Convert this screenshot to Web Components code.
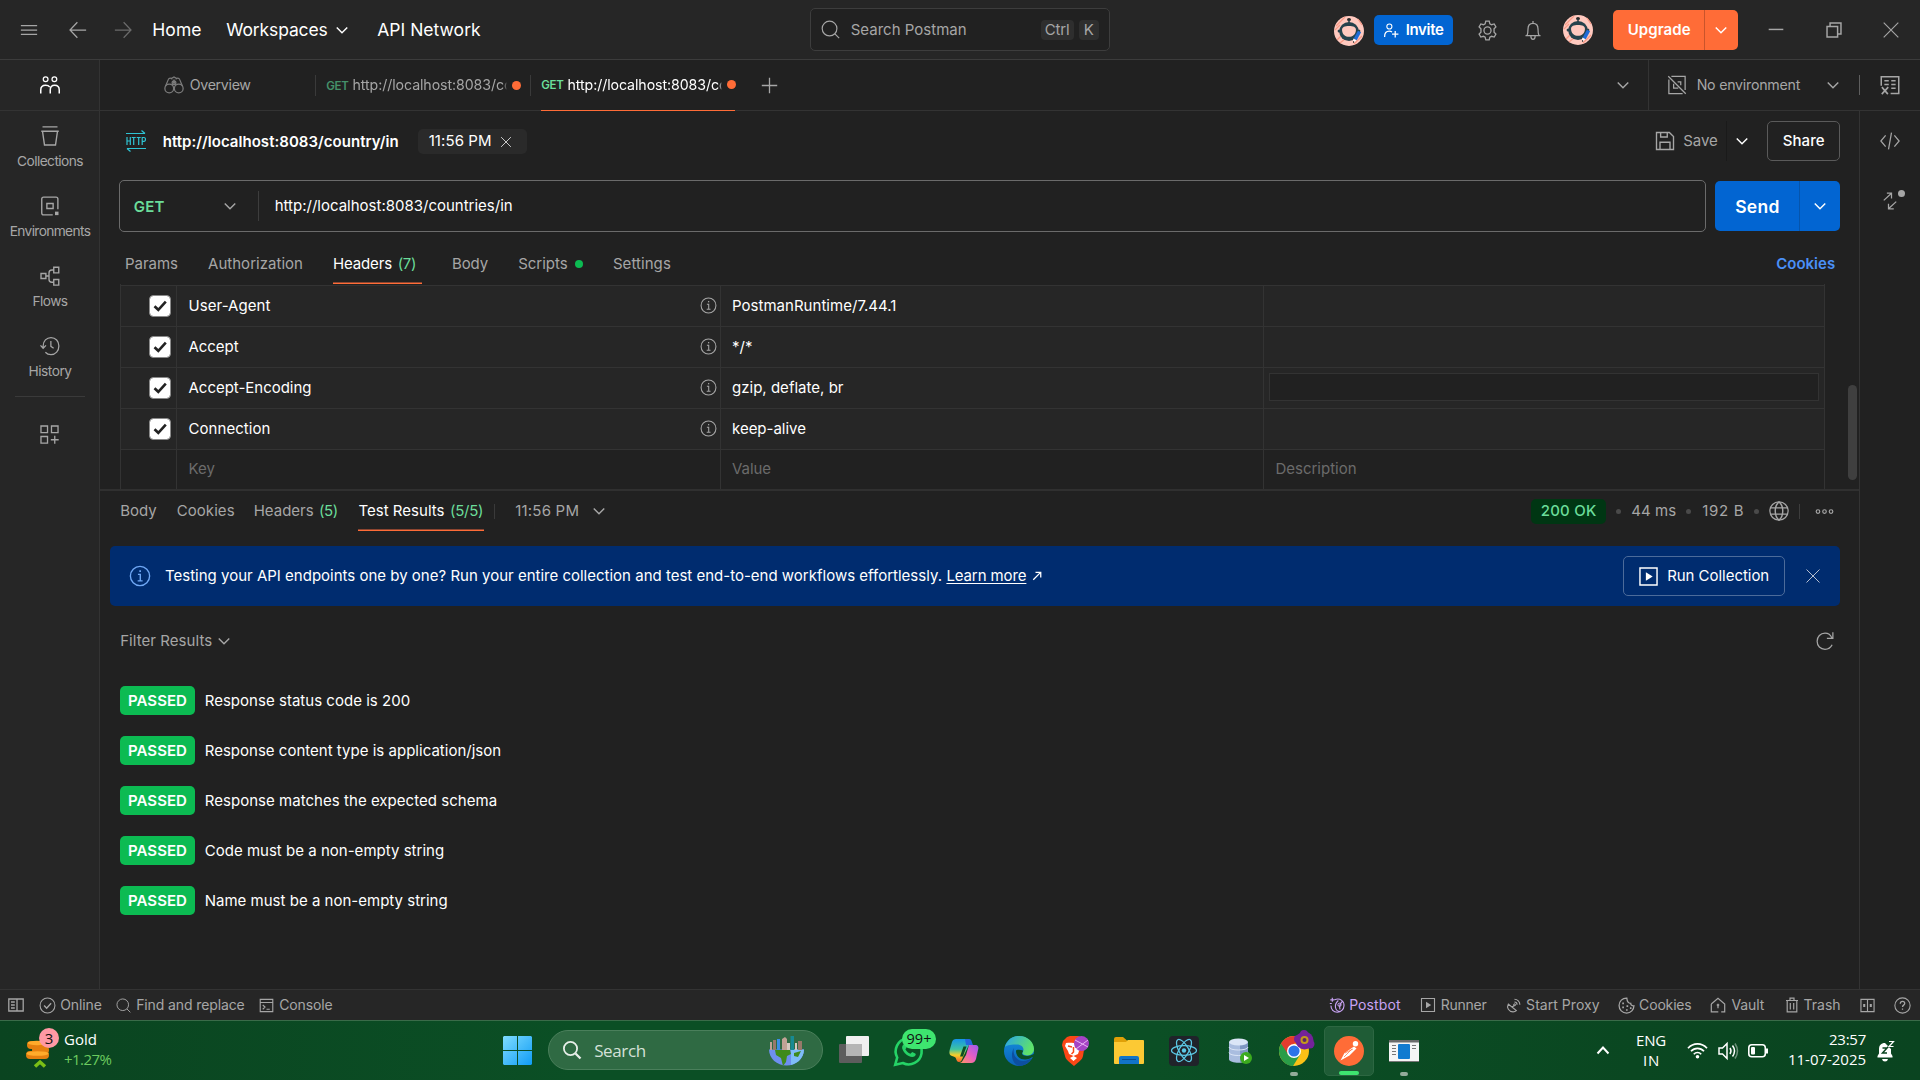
<!DOCTYPE html>
<html lang="en">
<head>
<meta charset="utf-8">
<title>Postman</title>
<style>
html,body{margin:0;height:100%;overflow:hidden;background:#212121}
body{font:15px Inter,"Liberation Sans",sans-serif;color:#a6a6a6;display:flex;flex-direction:column;width:1920px;height:1080px}
</style>
</head>
<body>
<top-bar></top-bar>
<app-shell></app-shell>
<status-bar></status-bar>
<task-bar></task-bar>
<script>
const ICONS = {
  menu: '<path d="M1.5 4.5h13M1.5 8h13M1.5 11.5h13"/>',
  back: '<path d="M14.5 8H2M7.5 1.8 1.6 8l5.9 6.2"/>',
  fwd: '<path d="M1.5 8H14M8.5 1.8 14.4 8l-5.9 6.2"/>',
  down: '<path d="M3.8 6 8 10.2 12.2 6" stroke-width="1.15"/>',
  search: '<circle cx="7.2" cy="7.2" r="6.2"/><path d="m11.7 11.7 3.6 3.6"/>',
  invite: '<circle cx="6" cy="4.2" r="2.4"/><path d="M1.5 14c0-3.4 1.6-5.4 4.4-5.4 1 0 1.9.3 2.6.8M11.5 8.5v6M8.5 11.5h6" stroke-width="1.2"/>',
  gear: '<circle cx="8" cy="8" r="2.700"/><path d="M6.7.9h2.6l.5 2 1.3.7 2-.6 1.300 2.2-1.400 1.500v2.600l1.400 1.500-1.300 2.2-2-.6-1.300.7-.5 2H6.700l-.5-2-1.300-.7-2 .6-1.300-2.200L3 9.300V6.700L1.600 5.200 2.900 3l2 .6 1.300-.7z"/>',
  bell: '<path d="M2 12.500h12M3.200 12.500c.6-1.200.8-2.500.8-5.300C4 4.500 5.600 2.600 8 2.600s4 1.900 4 4.600c0 2.800.2 4.100.8 5.300M8 2.600V.8M6.300 13c0 1.500.6 2.400 1.700 2.400S9.700 14.500 9.700 13"/>',
  min: '<path d="M1.500 7.500h13" stroke-width="1.300"/>',
  restore: '<path d="M1.800 4.800h9.400v9.400H1.800z M4.500 4.500V1.800h9.700v9.700h-3" stroke-width="1.300"/>',
  close: '<path d="m1.500 1.500 13 13M14.500 1.500l-13 13"/>',
  team: '<circle cx="4.500" cy="3.300" r="1.900"/><circle cx="11.500" cy="3.300" r="1.900"/><path d="M.6 14.800V12c0-2.400 1.500-3.800 3.900-3.800 1.600 0 2.600.5 3.300 1.400M8.200 14.800V12c0-2.400 1.200-3.800 3.500-3.800s3.700 1.400 3.700 3.800v2.800" stroke-width="1.200"/>',
  coll: '<path d="M2 .7h12M1 4.200h14M2 4.200l1.600 11h8.800l1.600-11" stroke-width="1.100"/>',
  env: '<path d="M14.300 10.500V2.400c0-1-.5-1.500-1.500-1.500H2.900c-1 0-1.500.5-1.500 1.500v11.200c0 1 .5 1.500 1.500 1.500h7.300M5.500 6h5v4h-5z" stroke-width="1.100"/><path d="M12 12.500h2.800v2.800H12z" fill="currentColor" stroke="none"/>',
  flow: '<path d="M.8 6h3.900v4H.8zM11 1h4v4.500h-4zM11 10.800h4v4.500h-4zM4.700 8h2.500M11 3.200H9.500C8 3.200 7.200 4 7.200 5.500v5c0 1.500.8 2.500 2.300 2.500H11" stroke-width="1.100"/>',
  hist: '<path d="M2.500 9.500V8c0-4 2.800-6.800 6.300-6.800 3.700 0 6.300 3 6.300 6.800s-2.600 6.900-6.300 6.900c-1.900 0-3.400-.7-4.500-1.900M.4 7.500l2.100 2.300 2.300-2.300M8.700 4v4.300l2.200 1.500"/>',
  apps: '<path d="M1.500 1.500h5v5h-5zM9.500 1.500h5v5h-5zM1.500 9.500h5v5h-5zM12 9v6M9 12h6"/>',
  binoc: '<circle cx="4.200" cy="10.800" r="3.500"/><circle cx="11.800" cy="10.800" r="3.500"/><path d="M1.200 9 3.500 3.500c.5-1.300 2.500-1.300 3 0M14.800 9l-2.300-5.500c-.5-1.300-2.500-1.300-3 0M5.500 3 8 1.600 10.500 3M6.800 8.300 8 4.500l1.200 3.800M7.700 10.300h.6"/><circle cx="8" cy="6.200" r="1.500"/>',
  plus: '<path d="M8 1.500v13M1.500 8h13" stroke-width="1.100"/>',
  noenv: '<path d="M3.500 1h11v11M12.500 14.800H1.500V3.500M1 1l14 14M8.500 5.500H11v2.600M5.300 7v3.500H9"/>',
  vars: '<path d="M1 8.500V1.300h14v13.500H8.500M3.500 4.500H7M3.500 7.500H7M9 4.500h3.500M9 7.500h3.500M9 10.500h3.500" stroke-width="1.200"/><path d="m1.500 9.700 4.800 5.600M6.600 9.700l-5.200 5.600" stroke-width="1.300"/>',
  save: '<path d="M1.200 1.200h10.300l3.300 3.300v10.300H1.200zM4.500 1.200v3.600h5.300V1.200M4 14.800V9h8v5.800" stroke-width="1.100"/>',
  code: '<path d="M4.500 3.500.7 8l3.800 4.500M11.500 3.500 15.300 8l-3.800 4.500M9.200 1.300 6.800 14.700"/>',
  sync: '<path d="M3 7.500 9 2M5.500 1.700h3.700V6M13 8.500 7 14M6.800 10.200v4H11" stroke-width="1"/>',
  info: '<circle cx="8" cy="8" r="7"/><path d="M6.500 6.800H8.200v4.600M6.300 11.500h3.600"/><path d="M7.500 3.800h1.200V5H7.500z" fill="currentColor" stroke="none"/>',
  globe: '<circle cx="8" cy="8" r="7.300"/><path d="M1.200 5.500h13.600M1.200 10.500h13.600M8 .7C5.800 2.500 5 5 5 8s.8 5.500 3 7.300c2.200-1.800 3-4.300 3-7.300S10.200 2.500 8 .7" stroke-width="1.150"/>',
  more: '<circle cx="2.500" cy="8" r="1.500"/><circle cx="8" cy="8" r="1.500"/><circle cx="13.500" cy="8" r="1.500"/>',
  ext: '<path d="M3 13 12.500 3.500M6 3.200h7V10" stroke-width="1.700"/>',
  run: '<path d="M1.500 1.500h13v13h-13z" stroke-width="1.100"/><path d="m6 4.800 5.200 3.200L6 11.200z" fill="currentColor" stroke="none"/>',
  refresh: '<path d="M13.500 5.500C12.500 3 10.600 1.700 8 1.700 4.300 1.700 1.700 4.500 1.700 8.200s2.600 6.400 6.300 6.400c2.600 0 4.600-1.300 5.700-3.600M14.300 1v4.800H9.500"/>',
  sidebar: '<path d="M.8 2h14.400v12H.8zM9 2v12M3 5h3.800M3 8h3.800M3 11h3.800" stroke-width="1.300"/>',
  online: '<circle cx="8" cy="8" r="7"/><path d="m4.800 8 2.400 2.500 4.200-4.600" stroke-width="1.300"/>',
  console: '<path d="M1.300 1.500h13.400v13H1.300zM1.300 4.800h13.400M4 7.500l2.400 2.200L4 12M8 12h3.500" stroke-width="1.200"/>',
  postbot: '<path d="M5.500 2.800C11 .5 15.200 4 15 8.700c-.2 4-3.200 6.500-6.700 6.500-3.700 0-6.500-2.800-6.300-6.600M3.300.8v4M1.300 2.800h4M.8 6.500h2M9.300 3.500C7 5.500 6 7.500 6.500 10.500s3 4 4.800 4M13.500 4.300c-2.500 2.200-3.500 4.500-2.500 8" stroke-width="1.150"/><circle cx="10.500" cy="7.800" r="1.600"/>',
  proxy: '<path d="M2.500 6.500c-2.200 3.800.5 8.300 5 8.300 1.500 0 2.700-.5 3.500-1.300zM6.500 10l3-3M9 4.300c1.600 0 2.800 1.200 2.800 2.900M9 1.300c3.300 0 5.800 2.500 5.800 5.900" stroke-width="1.200"/><circle cx="9.200" cy="7.200" r="1.100"/>',
  cookie: '<path d="M8.300 1C4.200.8 1 4 1 8s3.100 7.100 7.100 7.100S15 12 15 8.300c-1.800.2-3-.6-3-2.300-2 0-3.500-1.700-3.700-5z" stroke-width="1.200"/><path d="M4 6h1.600M4 9.800h1.600M8 8.600h1.600M7.500 12.200h1.600M11.200 10.500h1.500" stroke-width="1.500"/>',
  vault: '<path d="M1.300 7 8 1.200 14.700 7v7.800h-3.500M1.300 7v7.800h7M8 7.300v4" stroke-width="1.200"/><circle cx="8" cy="8" r=".9"/>',
  trash: '<path d="M2 3.500h12M6 3.300V1.200h4v2.100M3.200 3.500v11.300h9.600V3.500M6.300 6v6.500M9.700 6v6.500" stroke-width="1.200"/>',
  panes: '<path d="M1 1.500h14v13H1zM8 1.500v13M4 7h1v2H4zM11 7h1v2h-1z" stroke-width="1.200"/>',
  help: '<circle cx="8" cy="8" r="7.200"/><path d="M5.900 6.300c0-1.300.8-2.100 2.100-2.100s2.100.8 2.100 1.900c0 1.600-2.100 1.500-2.100 3.200M8 10.800V12" stroke-width="1.200"/>'
};

class UiIcon extends HTMLElement {
  connectedCallback() {
    const s = this.getAttribute('size') || 20;
    if (!this.shadowRoot) this.attachShadow({mode: 'open'});
    this.shadowRoot.innerHTML = `<style>:host{display:block;flex:none;width:${s}px;height:${s}px}svg{display:block;overflow:visible}</style>
      <svg width="${s}" height="${s}" viewBox="0 0 16 16" fill="none" stroke="currentColor">${ICONS[this.getAttribute('name')]}</svg>`;
  }
}
customElements.define('ui-icon', UiIcon);

/* A single line of text that tracks itself to fill the width given by "w". */
class UiText extends HTMLElement {
  connectedCallback() {
    if (!this.shadowRoot) this.attachShadow({mode: 'open'});
    this.shadowRoot.innerHTML = `<style>:host{display:block;flex:none;white-space:nowrap;line-height:20px}span{display:inline-block}</style><span><slot></slot></span>`;
    const w = +this.getAttribute('w');
    if (!w) return;
    this.style.width = w + 'px';
    const span = this.shadowRoot.querySelector('span');
    const gap = (w - span.getBoundingClientRect().width) / this.textContent.length;
    span.style.letterSpacing = Math.max(-0.7, Math.min(0.7, gap)) + 'px';
  }
}
customElements.define('ui-text', UiText);

/* Lays items out left to right; each item is [left, width, markup, style]. */
const row = (from, items) => {
  let end = from;
  return items.map(([x, w, html, css = '']) => {
    const m = x - end;
    end = x + w;
    return `<div class="i" style="margin-left:${m}px;width:${w}px;${css}">${html}</div>`;
  }).join('');
};
const t = (x, w, text, css) => [x - 0.3, w + 1, `<ui-text w="${w + 1}">${text}</ui-text>`, css];
const ic = (cx, name, size = 20, css) => [cx - size / 2, size, `<ui-icon name="${name}" size="${size}"></ui-icon>`, css];
const bar = (x, h, color, css = '') => [x, 1, '', `height:${h}px;background:${color};${css}`];
const W = 'color:#fff;', G = 'color:#6bdd9a;';

const base = `:host,*{box-sizing:border-box}.i{flex:none;display:block}.r{display:flex;align-items:center}.i.f,.f{display:flex;align-items:center}`;
const define = (tag, css, html) => customElements.define(tag, class extends HTMLElement {
  connectedCallback() {
    if (this.shadowRoot) return;
    this.attachShadow({mode: 'open'}).innerHTML = `<style>${base}${css}</style>${html}`;
  }
});

define('user-avatar', ':host{display:block}svg{display:block}', `<svg width="30" height="30" viewBox="0 0 30 30">
  <circle cx="15" cy="15" r="15" fill="#ffc9bf"/><path d="M2 10 11 1M1 14 6 9M24 3l4 6M3 24l5-5M6 27l5-4M20 28l8-8" stroke="#f79a86" stroke-width="1.200"/>
  <ellipse cx="15" cy="15.500" rx="9.800" ry="9.600" fill="#26424c"/><ellipse cx="15" cy="3.600" rx="2" ry="1.700" fill="#2a2a2a"/><path d="M15 4v3" stroke="#2b3f47" stroke-width="1.500"/>
  <circle cx="5.200" cy="15" r="1.600" fill="#26424c"/><circle cx="24.800" cy="15" r="1.600" fill="#26424c"/>
  <path d="M10 10.800c2-1 8-1 10 0 1.500.7 2.200 2.200 1.900 4-.6 4-3.400 6-6.900 6s-6.300-2-6.900-6c-.3-1.800.4-3.300 1.900-4z" fill="#ffc9bf"/>
  <path d="m25.500 15.500-4.300 8" stroke="#1f6bd8" stroke-width="3.600"/><path d="m19.200 22.500 3 1.800-3 2.700z" fill="#fff"/><path d="M19 25v2l1.500-1z" fill="#111"/></svg>`);

define('top-bar', `:host{display:block;flex:none;height:60px;background:#262626;border-bottom:1px solid #3c3c3c}
  .r{height:60px}
  .search{height:43px;border:1px solid #3d3d3d;border-radius:5px;background:#212121;display:flex;align-items:center;padding-left:10px}
  .key{height:20px;border-radius:4px;background:#2e2e2e}.btn{display:flex;align-items:center;border-radius:5px;color:#fff;font-weight:600}`,
  `<div class="r">${row(0, [
    ic(29, 'menu', 20), ic(78, 'back', 20), ic(123, 'fwd', 20, 'color:#6b6b6b'),
    t(152.500, 48.500, 'Home', W + 'font-size:17.500px'), t(226.500, 100.500, 'Workspaces', W + 'font-size:17.500px'),
    ic(342, 'down', 20, W), t(377.500, 102.500, 'API Network', W + 'font-size:17.500px'),
    [810, 300, `<div class="search">${row(821, [
      ic(830.500, 'search', 19), t(851, 115, 'Search Postman'),
      [1041, 33, `<div class="key">${row(1041, [t(1045, 24, 'Ctrl')])}</div>`],
      [1079, 20, `<div class="key">${row(1079, [t(1084, 9, 'K')])}</div>`]])}</div>`, 'margin-bottom:1px'],
    [1334, 30, '<user-avatar></user-avatar>', 'margin-top:1px'],
    [1374, 79, `<div class="btn" style="height:30px;background:#0265d2">${row(1374, [ic(1391.500, 'invite', 17), t(1406, 37, 'Invite')])}</div>`],
    ic(1488, 'gear', 21), ic(1533, 'bell', 20),
    [1563, 30, '<user-avatar></user-avatar>'],
    [1613, 125, `<div class="btn" style="height:40px;background:#ff6c37">${row(1613, [t(1628, 62, 'Upgrade'), bar(1704, 40, '#c9542b'), ic(1721, 'down', 20)])}</div>`],
    ic(1776, 'min', 18), ic(1834, 'restore', 18), ic(1891, 'close', 18)])}</div>`);

const side = (name, label, w) => `<div class="s"><ui-icon name="${name}" size="20"></ui-icon><ui-text w="${w + 1}">${label}</ui-text></div>`;
define('side-bar', `:host{display:block;flex:none;width:100px;background:#262626;border-right:1px solid #333}
  .ws{height:51px;border-bottom:1px solid #333;color:#fff;display:flex;justify-content:center;align-items:center}
  .s{height:70px;display:flex;flex-direction:column;align-items:center;padding:15px 0 0 1px;gap:5px;font-size:13.750px}
  hr{border:0;height:1px;background:#3a3a3a;margin:5px 14px 27px 15px}.a{display:flex;justify-content:center}`,
  `<div class="ws"><ui-icon name="team" size="20"></ui-icon></div>
   ${side('coll', 'Collections', 65)}${side('env', 'Environments', 79.500)}${side('flow', 'Flows', 34)}${side('hist', 'History', 42)}
   <hr><div class="a"><ui-icon name="apps" size="21"></ui-icon></div>`);

define('tab-strip', `:host{display:flex;align-items:center;flex:none;height:51px;border-bottom:1px solid #333;font-size:14.200px}
  .url{-webkit-mask-image:linear-gradient(90deg,#000 98%,transparent);mask-image:linear-gradient(90deg,#000 98%,transparent)}
  .dot{width:9px;height:9px;border-radius:50%;background:#ff6c37}
  .act{height:51px;border-bottom:1px solid #ff6c37;display:flex;align-items:center;color:#fff}`,
  row(100, [
    ic(174, 'binoc', 20, 'color:#7c7c7c'), t(190, 60, 'Overview'), bar(315, 21, '#3a3a3a'),
    t(326.500, 21.500, 'GET', 'color:#45916a;font-size:11.500px;font-weight:600;margin-top:1px;'),
    [352.500, 154.500, '<div class="url"><ui-text w="160">http://localhost:8083/co</ui-text></div>'],
    [512.500, 9, '<div class="dot"></div>'], bar(530, 21, '#3a3a3a'),
    [541, 194, `<div class="act">${row(541, [
      t(541.500, 21.500, 'GET', G + 'font-size:11.500px;font-weight:600;margin-top:1px;'),
      [567.500, 154.500, '<div class="url"><ui-text w="160">http://localhost:8083/co</ui-text></div>'],
      [727.500, 9, '<div class="dot"></div>']])}</div>`],
    ic(770, 'plus', 19), ic(1623, 'down'), bar(1648, 50, '#333'), ic(1677.500, 'noenv', 20),
    t(1697, 102.500, 'No environment'), ic(1833, 'down'), bar(1859, 20, '#5e5e5e'), ic(1890, 'vars', 20)]));

define('request-head', `:host{display:block;flex:none}
  .r.title{height:60px}.pill{height:25px;background:#2a2a2a;border-radius:5px;color:#fff}.share{height:40px;border:1px solid #5a5a5a;border-radius:5px;color:#fff;font-weight:500}
  .urlrow{height:52px;margin-top:9px}.box{height:52px;border:1px solid #6b6b6b;border-radius:5px}
  .send{height:50px;background:#0265d2;border-radius:5px;color:#fff;font-weight:600}
  svg{display:block}`,
  `<div class="r title">${row(100, [
    [126, 20, `<svg width="20" height="22" viewBox="0 0 20 22" fill="none" stroke="#2fc3d3" stroke-width="1.200"><path d="M0 3.500h19M15.500.5l3.500 3M20 18.500H1M4.500 21.500l-3.500-3"/><path d="M1 7v8M4.300 7v8M1 11h3.300M5.700 7.500h4M7.700 7.500V15M10.700 7.500h4M12.700 7.500V15M16.200 15V7.500h1.800c2 0 2 3.800 0 3.800h-1.800"/></svg>`],
    t(163, 235, 'http://localhost:8083/country/in', W + 'font-weight:600;margin-top:1px'),
    [418, 109, `<div class="pill f">${row(418, [t(429, 62, '11:56 PM', 'margin-bottom:1px'), ic(506, 'close', 12)])}</div>`, 'margin-top:1px'],
    ic(1665, 'save', 20), t(1683.500, 33.500, 'Save'), bar(1726, 40, '#1a1a1a'), ic(1742, 'down', 20, W),
    [1767, 73, `<div class="share f">${row(1768, [t(1783, 41, 'Share')])}</div>`]])}</div>
   <div class="r urlrow">${row(100, [
    [119, 1587, `<div class="box f">${row(120, [t(134, 30, 'GET', G + 'font-weight:600;margin-top:2px'), ic(230, 'down'), bar(258, 30, '#3d3d3d'), t(275, 237, 'http://localhost:8083/countries/in', W)])}</div>`],
    [1715, 125, `<div class="send f">${row(1715, [t(1735.500, 43.500, 'Send', 'font-size:17.500px;margin-top:1px'), bar(1799, 50, '#0555ad'), ic(1820, 'down')])}</div>`]])}</div>`);

define('request-tabs', `:host{display:flex;align-items:stretch;flex:none;height:52px}
  .i{padding-top:22px}.dot{width:8px;height:8px;border-radius:50%;background:#0cbb52;margin-top:6px}
  .act{display:flex;height:52px;margin-top:-22px;padding-top:22px;color:#fff;background:linear-gradient(#ff6c37,#ff6c37) 0 51px/100% 1px no-repeat,linear-gradient(#8c4530,#8c4530) 0 50px/100% 1px no-repeat}.act .i{padding:0}`,
  row(100, [
    t(125.300, 52, 'Params'), t(208.300, 94, 'Authorization'),
    [333, 89, `<div class="act">${row(333, [t(333.300, 58, 'Headers'), t(398, 17.500, '(7)', G)])}</div>`],
    t(452.300, 35, 'Body'), t(518.500, 48.500, 'Scripts'), [575, 8, '<div class="dot"></div>'],
    t(613.200, 57, 'Settings'), t(1776.500, 58, 'Cookies', 'color:#4a90f7;font-weight:600')]));

const hrow = (k, v, extra = '') => `<div class="tr">
  <div class="td c"><svg width="22" height="22" viewBox="0 0 22 22"><rect x=".5" y=".5" width="21" height="21" rx="4" fill="#fff" stroke="#8a8a8a"/><path d="m5.500 11.200 3.800 3.600 7.500-8.200" fill="none" stroke="#222" stroke-width="2.600"/></svg></div>
  <div class="td k"><ui-text w="${k[1]}">${k[0]}</ui-text><ui-icon name="info" size="17"></ui-icon></div>
  <div class="td v"><ui-text w="${v[1]}">${v[0]}</ui-text></div><div class="td d">${extra}</div></div>`;
define('headers-table', `:host{display:flex;flex:none;height:205px;padding-left:20px}
  .tb{width:1705px;padding-top:1px;border-left:1px solid #333;border-right:1px solid #333}
  .tr{height:41px;display:flex;border-top:1px solid #333;background:#262626;color:#fff}
  .tr.new{height:40px;background:#212121;color:#6b6b6b}.new .td{padding-bottom:1px}
  .td{display:flex;align-items:center;border-right:1px solid #333}.c{width:56px;padding-left:28px}
  .k{width:544px;padding:0 3px 0 11.500px;justify-content:space-between}.k ui-icon{color:#a6a6a6;margin-bottom:1px}
  .v{width:543px;padding-left:11px}.d{flex:1;border:0;padding-left:5px}.new .d{padding-left:11.500px}
  .in{width:550px;height:28px;border:1px solid #333;background:#212121;margin-bottom:2px}
  .thumb{width:9px;height:95px;margin:101px 0 0 23px;border-radius:5px;background:#3f3f3f}svg{display:block}`,
  `<div class="tb">${hrow(['User-Agent', 82], ['PostmanRuntime/7.44.1', 164.500])}${hrow(['Accept', 50], ['*/*', 20.500])}
   ${hrow(['Accept-Encoding', 123], ['gzip, deflate, br', 111.500], '<div class="in"></div>')}${hrow(['Connection', 82], ['keep-alive', 74])}
   <div class="tr new"><div class="td c"></div><div class="td k"><ui-text w="26.500">Key</ui-text></div><div class="td v"><ui-text w="39">Value</ui-text></div><div class="td d"><ui-text w="81">Description</ui-text></div></div></div>
   <div class="thumb"></div>`);

const sdot = x => [x - 2.500, 5, '<div style="width:5px;height:5px;border-radius:50%;background:#4a4a4a"></div>'];
define('response-bar', `:host{display:flex;align-items:center;flex:none;height:42px;border-top:2px solid #303030}
  .act{display:flex;height:40px;padding-top:10px;color:#fff;background:linear-gradient(#ff6c37,#ff6c37) 0 39px/100% 1px no-repeat,linear-gradient(#8c4530,#8c4530) 0 38px/100% 1px no-repeat}
  .ok{height:25px;border-radius:5px;background:#003613;color:#6bdd9a;font-weight:500}`,
  row(100, [
    t(120.500, 35.500, 'Body'), t(177, 57, 'Cookies'), t(254, 59, 'Headers'), t(319.300, 18, '(5)', G),
    [358, 126, `<div class="act">${row(358, [t(358.800, 85, 'Test Results'), t(450.200, 32.500, '(5/5)', G)])}</div>`],
    bar(494, 15, '#3a3a3a'), t(515.500, 63, '11:56 PM'), ic(599, 'down'),
    [1531, 75, `<div class="ok f">${row(1531, [t(1541, 55, '200 OK')])}</div>`], sdot(1618.500), t(1631.500, 44, '44 ms'), sdot(1688.500),
    t(1702.500, 41, '192 B'), sdot(1756.500), ic(1779, 'globe', 20), bar(1799, 15, '#3d3d3d'), ic(1825, 'more', 19)]));

define('promo-banner', `:host{display:flex;align-items:center;flex:none;height:60px;width:1730px;margin:15px 0 0 10px;border-radius:5px;background:#002c6f;color:#fff}
  .b{height:40px;border:1px solid #4c6b9a;border-radius:5px}u{text-underline-offset:2px}`,
  row(110, [
    ic(140, 'info', 22, 'color:#6fa8f5'), t(165.300, 776, 'Testing your API endpoints one by one? Run your entire collection and test end-to-end workflows effortlessly.'),
    t(946.700, 79, '<u>Learn more</u>'), ic(1037.500, 'ext', 12),
    [1623, 162, `<div class="b f">${row(1624, [ic(1649, 'run', 21), t(1667.500, 101, 'Run Collection')])}</div>`], ic(1813, 'close', 16, 'color:#b6bfd0')]));

const pass = (w, s) => `<test-result><ui-text w="${w + 1}">${s}</ui-text></test-result>`;
define('test-result', `:host{display:flex;height:50px;padding:10px 0 0 20px;color:#fff}
  .tag{width:75px;height:29px;border-radius:5px;background:#0cbb52;font-weight:600;display:flex;justify-content:center;align-items:center;margin-right:9.700px}.x{padding-top:5px}`,
  `<div class="tag"><ui-text w="59">PASSED</ui-text></div><div class="x"><slot></slot></div>`);
define('test-results', ':host{display:block}.r{height:70px}',
  `<div class="r">${row(100, [t(120.500, 91, 'Filter Results'), ic(224, 'down'), ic(1825, 'refresh', 20)])}</div>
   ${pass(204.500, 'Response status code is 200')}${pass(295.500, 'Response content type is application/json')}${pass(291.500, 'Response matches the expected schema')}${pass(238.500, 'Code must be a non-empty string')}${pass(242, 'Name must be a non-empty string')}`);

define('right-rail', `:host{display:flex;flex-direction:column;align-items:center;width:61px;flex:none;border-left:1px solid #333;padding-top:20px}
  .s{position:relative;margin-top:40px}.d{position:absolute;left:18px;top:-1px;width:7px;height:7px;border-radius:50%;background:#a6a6a6}`,
  `<ui-icon name="code" size="20"></ui-icon><div class="s"><ui-icon name="sync" size="20"></ui-icon><div class="d"></div></div>`);

define('app-shell', `:host{display:flex;flex:1;min-height:0;background:#212121}.m{flex:1;display:flex;flex-direction:column}.b{flex:1;display:flex}.w{width:1759px;flex:none}`,
  `<side-bar></side-bar><div class="m"><tab-strip></tab-strip><div class="b"><div class="w"><request-head></request-head><request-tabs></request-tabs><headers-table></headers-table>
   <response-bar></response-bar><promo-banner></promo-banner><test-results></test-results></div><right-rail></right-rail></div></div>`);

define('status-bar', `:host{display:flex;align-items:center;flex:none;height:31px;background:#262626;border-top:1px solid #333;font-size:14px}`,
  row(0, [
    ic(15.500, 'sidebar', 16), ic(47.500, 'online', 17), t(60.500, 40.500, 'Online'), ic(123.500, 'search', 15), t(136.500, 107.500, 'Find and replace'),
    ic(266.500, 'console', 15), t(279.500, 52.500, 'Console'), ic(1337, 'postbot', 16, 'color:#c9a3f5'), t(1349.500, 50.500, 'Postbot', 'color:#c9a3f5'),
    ic(1428, 'run', 16), t(1441, 45, 'Runner'), ic(1514, 'proxy', 15), t(1526.500, 72.500, 'Start Proxy'), ic(1626.500, 'cookie', 17),
    t(1639.500, 51.500, 'Cookies'), ic(1718.500, 'vault', 16), t(1732, 31.500, 'Vault'), ic(1792, 'trash', 16), t(1804, 36, 'Trash'),
    ic(1867.500, 'panes', 15), ic(1902.500, 'help', 17)]));

const art = (w, h, body) => `<svg width="${w}" height="${h}" viewBox="0 0 ${w} ${h}">${body}</svg>`;
define('task-bar', `:host{display:flex;align-items:center;flex:none;height:60px;border-top:1px solid #3a6b49;color:#fff;font-family:"Open Sans","Noto Sans",sans-serif;background:linear-gradient(90deg,#0a4420,#0b4f25 30%,#0b4f25 60%,#0a4721 85%,#0a4420)}
  svg{display:block;overflow:visible}.two ui-text{line-height:20px}.pill{height:40px;border-radius:20px;background:#2f6a43;border:1px solid #4a7f5b}
  .a{position:relative;height:58px;display:flex;align-items:center;justify-content:center}.n{position:absolute;display:flex;align-items:center;justify-content:center;color:#111}
  .ind{position:absolute;bottom:4px;width:8px;height:4px;border-radius:2px;background:#93ab9a}.on{height:50px;border-radius:5px;background:#1f5c36;border:1px solid #2d6742}.on .ind{bottom:0;width:20px;background:#3ee56f}`,
  row(0, [
    [26, 24, `<div class="a">${art(24, 31, `<g fill="#e5800f"><rect x="1" y="6" width="20" height="8" rx="4"/><rect x="6" y="11" width="17" height="8" rx="4"/><rect x="0" y="16" width="23" height="8" rx="4"/></g><g fill="#ffab2b"><ellipse cx="11" cy="8" rx="9.500" ry="2.200"/><ellipse cx="11.500" cy="18.500" rx="11" ry="2.300"/></g><path d="m9 31.500 5-4.500 5 4.500" stroke="#7bbf16" stroke-width="3.500" fill="none"/>`)}<div class="n" style="left:13px;top:6px;width:20px;height:20px;border-radius:50%;background:#ff99a4;font-size:15px">3</div></div>`],
    [64, 49, '<div class="two"><ui-text w="33">Gold</ui-text><ui-text w="47.500" style="color:#6ccb5f">+1.27%</ui-text></div>', 'margin-bottom:3px'],
    [503, 29, art(29, 29, '<defs><linearGradient id="w" x1="0" y1="0" x2="1" y2="1"><stop stop-color="#7fdcff"/><stop offset="1" stop-color="#109cf5"/></linearGradient></defs><path fill="url(#w)" d="M0 1 1 0h13v14H0zM15 0h13l1 1v13H15zM0 15h14v14H1l-1-1zM15 15h14v13l-1 1H15z"/>')],
    [548, 275, `<div class="pill f">${row(549, [
      [563, 18, art(18, 18, '<circle cx="7.500" cy="7.500" r="6.600" fill="none" stroke="#e8efe9" stroke-width="1.800"/><path d="m12.500 12.500 5 5" stroke="#e8efe9" stroke-width="2.300"/>')],
      t(594.500, 50.500, 'Search', 'font-size:17px;color:#d5e1d8;margin-top:1px'),
      [769, 35, art(35, 31, '<clipPath id="g"><path d="M0 14.500h35c0 9-8 16-17.500 16S0 23.500 0 14.500z"/></clipPath><g clip-path="url(#g)"><rect y="14" width="35" height="17" fill="#6e8ff0"/><path d="M22 14h13v17H22z" fill="#7fbcf8"/><path d="M6 15h15l1 4-4 2-1 6-3 4-2-8-5-3zM25 18l7-2-3 6-4-1z" fill="#3f8a1c"/></g><path d="M1 15V7h2v8zM13 15V4l3-2 2 2v11z" fill="#c0a295"/><path d="M4 15V5h3v10zM29 15V6h4v9z" fill="#97796a"/><path d="M8 15V4h3v11z" fill="#3b8ee5"/><path d="M21.500 15V1h3.500v14z" fill="#178a93"/><path d="M18 15V8h3v7zM26 15V8h2v7z" fill="#d5c9c0"/>')]])}</div>`, 'margin-bottom:1px'],
    [839, 30, art(30, 28, '<rect y="8" width="23" height="19" rx="1" fill="#5d5d5d"/><rect x="7" width="23" height="20" rx="1" fill="#f0f0f0"/><rect x="7" y="8" width="16" height="12" fill="#b5b5b5"/>'), 'margin-bottom:2px'],
    [894, 30, `<div class="a">${art(30, 30, '<path d="M1.200 28.800l2-7.300A13 13 0 1 1 8.800 27z" fill="none" stroke="#25d366" stroke-width="2.600"/><path d="M9 9c1-1.500 2.500-1 3 .5l.7 2-1.300 1.800c1.200 2.200 2.800 3.500 5 4.500l1.800-1.700 3 1.300c1 .5.5 2-.5 2.800-1.500 1.200-3.500 1-6-.2-3-1.400-5.500-4.200-6.300-7C8 11.500 8 10.500 9 9z" fill="#25d366"/>')}<div class="n" style="left:8px;top:7px;width:34px;height:20px;border-radius:10px;background:#3ee56f;font-size:14.500px">99+</div></div>`],
    [949, 30, art(30, 28, '<defs><linearGradient id="c1" x1="0" y1="0" x2="0" y2="1"><stop stop-color="#1593e8"/><stop offset=".45" stop-color="#3fc5a0"/><stop offset=".7" stop-color="#f5d02a"/><stop offset="1" stop-color="#f2602c"/></linearGradient><linearGradient id="c2" x1="1" y1="0" x2="0" y2="1"><stop stop-color="#9a5bf0"/><stop offset=".5" stop-color="#e95fc0"/><stop offset="1" stop-color="#ff9a5a"/></linearGradient></defs><path d="M7 2h11c2 0 3 1 3.500 3L14 20c-1 3-2 5-4 5-2 0-2.500-2-3-3.500C6.500 20 5 19.500 3 19 0 18 0 15 1 12l2-7c.7-2 2-3 4-3z" fill="url(#c1)"/><path d="M22 8h4c3 0 4 2 3 5l-2 9c-1 2.500-2 4-5 4H10c2 0 3-1 4-3l3-5 3-10z" fill="url(#c2)"/><path d="M16 2h4c2 0 2.500 1.500 3 3.500L24 8h-7z" fill="#2368dd"/><path d="M14.500 9.500h3L14 19.500h-3z" fill="#0b4f25"/>')],
    [1004, 30, art(30, 30, '<defs><linearGradient id="e1" x1="0" y1="0" x2="1" y2=".4"><stop stop-color="#2aa3e8"/><stop offset="1" stop-color="#5fe36a"/></linearGradient><linearGradient id="e2" x1="0" y1="0" x2="0" y2="1"><stop stop-color="#1590df"/><stop offset="1" stop-color="#0b62b8"/></linearGradient></defs><circle cx="15" cy="15" r="15" fill="url(#e2)"/><path d="M1 11C2.500 4.500 8 0 15 0c9 0 15 6.500 15 13 0 4-3 6.500-6.500 6.500-3 0-5-1-5-2.500 0-1 1-1.500 1-3.500 0-2.500-2.500-5-6.500-5C8 8.500 3 9 1 11z" fill="url(#e1)"/><path d="M10 12c-2 7 3 13 9 13 4 0 6-1.500 9-3C25 27 20 30 15 30c-7-2-9-12-5-18z" fill="#0d4fa0"/><path d="M12 15c0 5 4 8.500 9 8.500 3 0 6-1.500 7.500-2.500l1.500 1v-4l-4 1.500-3 .5c-3 0-5-1-5-2.500 0-1 1-1.500 1-3-3-1-7-1-7 .500z" fill="#0b4f25"/>')],
    [1061, 28, `<div class="a">${art(28, 30, '<path d="m6 1 3-1h8l3 1 4 3v4l-2 12c-.5 3-3 5-9 10-6-5-8.500-7-9-10L1 9l1-4z" fill="#fa4716"/><path d="M5 7c2 0 4-.5 7.500 0C16 6.500 18 7 20 7l1 3-3 5-1 3-4.500 2L8 18l-1-3-3-5zM9 22l3.500-2 3.500 2-3.500 3z" fill="#fff"/><path d="m7 10 4 1M18 10l-4 1M12.500 11v5l-2 2" stroke="#fa4716" stroke-width="1.500" fill="none"/><circle cx="20.500" cy="7.500" r="7.500" fill="#a543c5"/><path d="m15 13 12-9M14 4l13 7" stroke="#e9b1f3" stroke-width="1"/>')}</div>`],
    [1114, 30, art(30, 27, '<path d="M0 2q0-2 2-2h7l4 3.500h16l1 1V26H0z" fill="#e0a008"/><path d="M0 5h12l2-2h15q1 0 1 1v22q0 1-1 1H1q-1 0-1-1z" fill="#fcc934"/><path d="M5 27v-6q0-2 2-2h16q2 0 2 2v6z" fill="#1274c8"/><path d="M8 22.500h14" stroke="#0b4d91" stroke-width="1"/>')],
    [1169, 30, art(30, 30, '<rect width="30" height="30" rx="4" fill="#20232a"/><g fill="none" stroke="#5cc9e6" stroke-width="1.200"><ellipse cx="15" cy="14.500" rx="12.500" ry="4.800"/><ellipse cx="15" cy="14.500" rx="12.500" ry="4.800" transform="rotate(60 15 14.500)"/><ellipse cx="15" cy="14.500" rx="12.500" ry="4.800" transform="rotate(120 15 14.500)"/></g><circle cx="15" cy="14.500" r="2.200" fill="#5cc9e6"/>')],
    [1229, 24, art(24, 26, '<path d="M0 4v17c0 5 19 5 19 0V4z" fill="#a9bddf"/><path d="M11 4v20c5 0 8-1 8-3V4z" fill="#7f97c2"/><ellipse cx="9.500" cy="4" rx="9.500" ry="3.500" fill="#dbe6f7"/><path d="M0 9c0 4 19 4 19 0M0 14.500c0 4 19 4 19 0" fill="none" stroke="#dbe6f7"/><circle cx="17" cy="20" r="6" fill="#3cab1e"/><path d="m15 17 5 3-5 3z" fill="#fff"/>')],
    [1279, 30, `<div class="a">${art(30, 30, '<circle cx="15" cy="15" r="15" fill="#fbc116"/><path d="M2 7.500A15 15 0 0 0 14 30l7.500-12L15 15z" fill="#2a9d48"/><path d="M2 7.500A15 15 0 0 1 28 7.500H15L9 18z" fill="#e33b2e"/><circle cx="15" cy="15" r="7" fill="#fff"/><circle cx="15" cy="15" r="5.600" fill="#2b74e8"/><g fill="#74239a"><circle cx="25.500" cy="4.500" r="9"/><circle cx="19" cy="3" r="4"/><circle cx="31" cy="8" r="4.500"/><circle cx="25" cy="-2" r="4"/></g><circle cx="25.500" cy="4" r="4" fill="#c39a1c"/><circle cx="25.500" cy="4" r="2" fill="#5b2860"/>')}<div class="ind"></div></div>`],
    [1324, 50, `<div class="a on">${art(30, 30, '<circle cx="15" cy="15" r="15" fill="#ff6c37"/><circle cx="21.500" cy="7.800" r="2.700" fill="#fff"/><path d="m20 10.500 2.500 2-7 7-9 5 4-7.500z" fill="#fff"/><path d="m11 17 8-4M10 21l8-8" stroke="#ff6c37" stroke-width=".7"/>')}<div class="ind"></div></div>`],
    [1389, 30, `<div class="a">${art(30, 22, '<rect width="30" height="22" fill="#f5f5f5"/><path d="M0 0h30v2.500H0z" fill="#6b6b6b"/><path d="M0 21.500h30" stroke="#777"/><rect x="9" y="4" width="12" height="15" rx="1" fill="#117bd0"/><path d="M3 5.500h4M3 8.500h4M3 11.500h4M3 14.500h4M23 5.500h4M23 8.500h4" stroke="#777"/>')}<div class="ind"></div></div>`],
    [1596, 14, art(14, 9, '<path d="m1.500 7.500 5.500-6 5.500 6" fill="none" stroke="#fff" stroke-width="2"/>')],
    [1636, 31, '<div class="two"><ui-text w="30">ENG</ui-text><ui-text w="17" style="margin-left:7px">IN</ui-text></div>', 'margin-bottom:2px'],
    [1687, 21, art(21, 17, '<g fill="none" stroke="#fff" stroke-width="1.700"><path d="M1 6.200c5.300-5.800 13.700-5.800 19 0"/><path d="M4 9.300c3.600-4 9.400-4 13 0"/><path d="M6.800 12.200c2.100-2.300 5.300-2.300 7.400 0"/></g><circle cx="10.500" cy="14.800" r="1.800" fill="#fff"/>')],
    [1718, 21, art(21, 18, '<g fill="none" stroke="#fff" stroke-width="1.500"><path d="M1 6h3.500L9 1.500v15L4.500 12H1z"/><path d="M12 6q2 3 0 6M14.500 3.500q4 5.500 0 11"/><path d="M17 1.500q5 7.500 0 15" opacity=".4"/></g>')],
    [1748, 20, art(20, 14, '<rect x=".8" y=".8" width="16.500" height="12" rx="3" fill="none" stroke="#fff" stroke-width="1.600"/><rect x="3" y="3" width="4" height="7.600" rx="1" fill="#fff"/><path d="M19 4.500v5" stroke="#fff" stroke-width="2"/>')],
    [1788, 79, '<div class="two"><ui-text w="37" style="margin-left:41px">23:57</ui-text><ui-text w="78">11-07-2025</ui-text></div>', 'margin-bottom:3px'],
    [1877, 18, art(18, 22, '<path d="M8 3c-4 0-6 2.500-6 6v4.500L.5 16v1.500h15V16L14 13.500V9z" fill="#fff"/><path d="M5 19h6q-.5 2.500-3 2.500T5 19z" fill="#fff"/><path d="M5.500 8h4.500l-4.500 5H10M11.500 1.500h4.500l-4.500 5H16" fill="none" stroke="#0a4420" stroke-width="1.500"/><path d="M12 1.500h4.500L12 6.500h4.500" fill="none" stroke="#fff" stroke-width="1.200"/>')]]));
</script>
</body>
</html>
